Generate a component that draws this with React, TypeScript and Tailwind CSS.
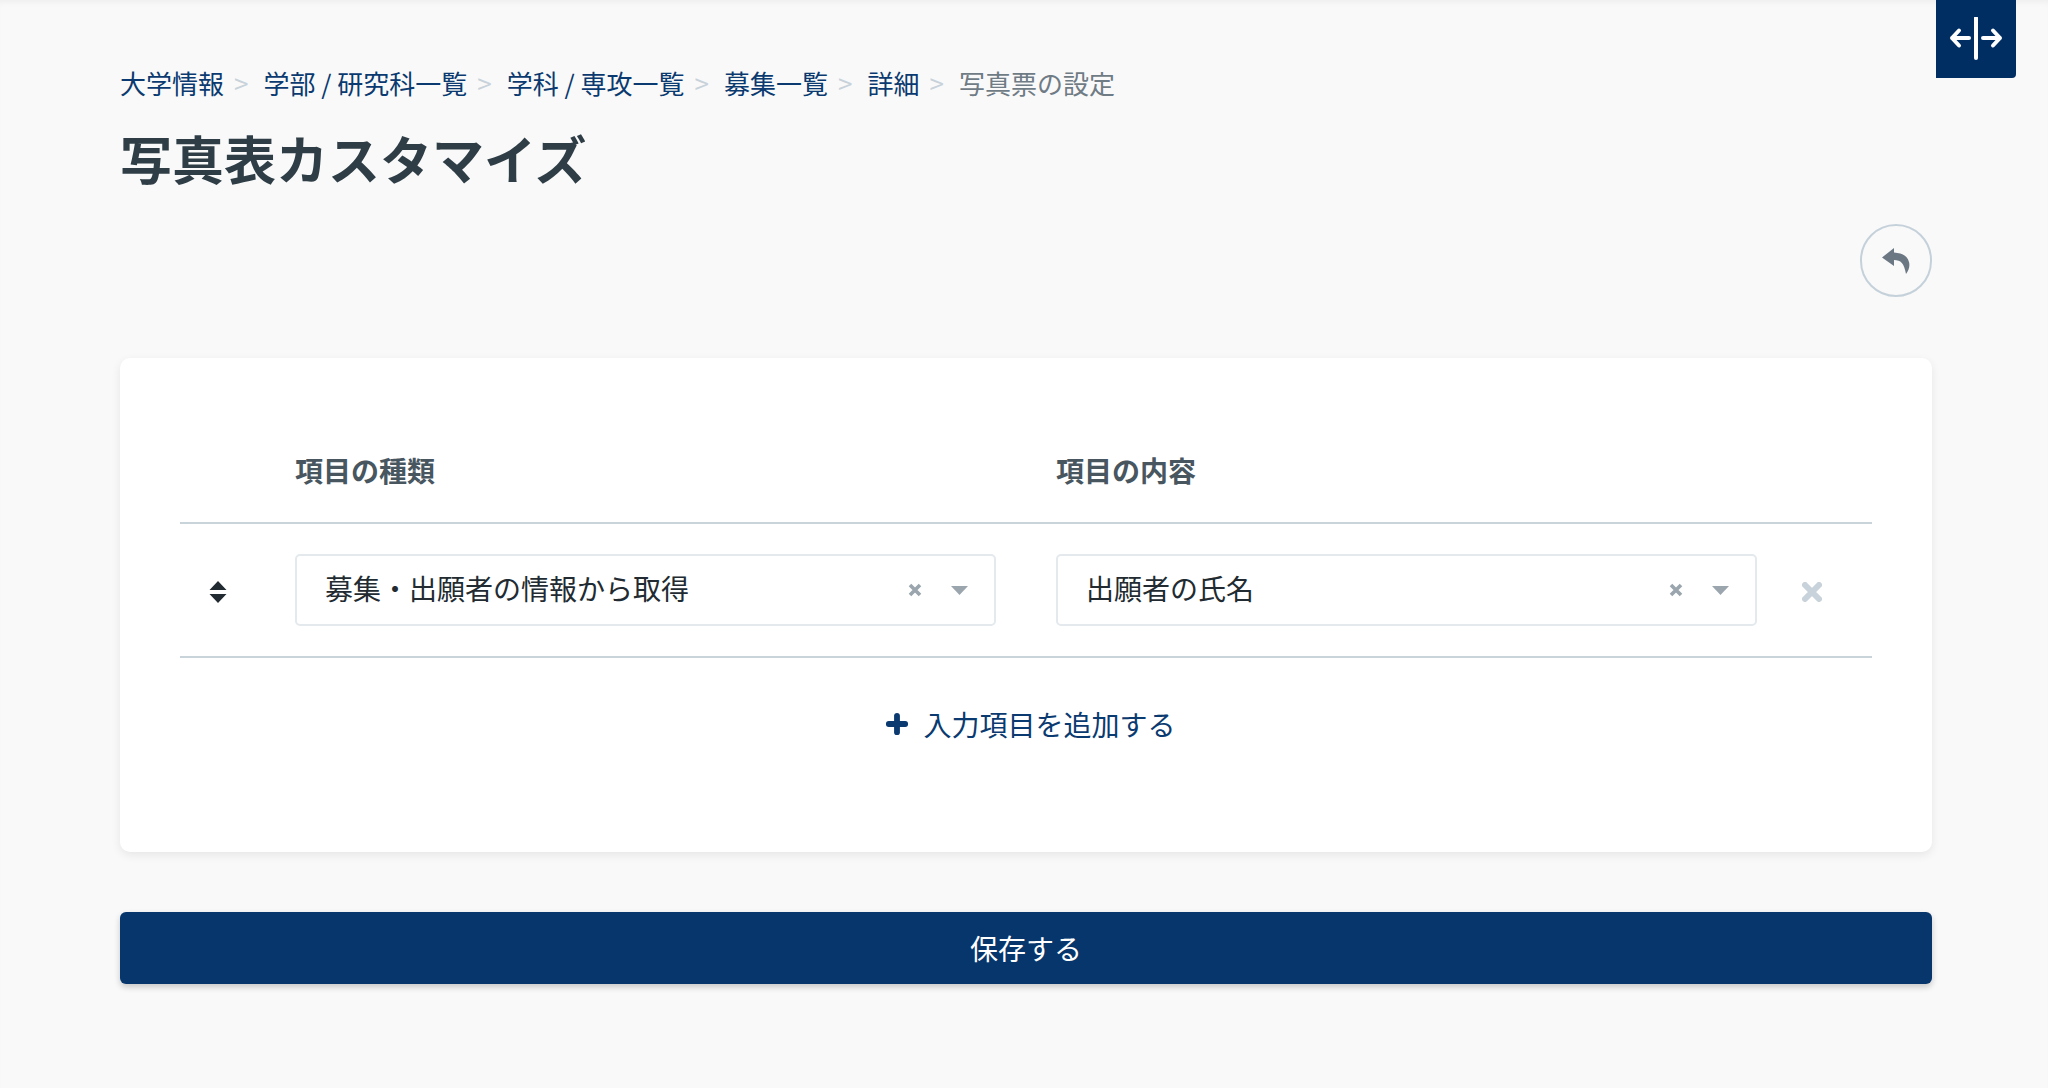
import { Plus } from "lucide-react";

const crumbs = ["大学情報", "学部 / 研究科一覧", "学科 / 専攻一覧", "募集一覧", "詳細"];

function SelectBox({ value }: { value: string }) {
    return (
        <div className="flex h-[72px] flex-1 items-center rounded-[5px] border-2 border-[#e4e9ed] bg-white pl-[28px] pr-[26px] text-[28px] text-[#212b31]">
            <span className="flex-1 pb-[4px] leading-none">{value}</span>
            <svg className="mr-[29px] h-[14px] w-[14px]" viewBox="0 0 14 14">
                <path d="M2 2l10 10M12 2L2 12" stroke="#9aa5ad" strokeWidth="3.6" />
            </svg>
            <svg className="h-[9px] w-[17px]" viewBox="0 0 17 9">
                <path d="M0 0h17L8.5 9z" fill="#9aa5ad" />
            </svg>
        </div>
    );
}

export default function App() {
    return (
        <div className="relative min-h-[1088px] bg-[#f9f9f9] pl-[120px] pr-[116px] pt-[61px] font-['Noto_Sans_CJK_JP','Noto_Sans',sans-serif] shadow-[inset_0_6px_6px_-4px_rgba(0,0,0,0.05)]">
            <button className="absolute right-[32px] top-0 flex h-[78px] w-[80px] items-center justify-center rounded-br-[4px] bg-[#002e63]">
                <svg className="h-[44px] w-[54px]" viewBox="0 0 54 44" fill="none" stroke="white" strokeWidth="4" strokeLinecap="round" strokeLinejoin="round">
                    <path d="M27 1v40" />
                    <path d="M20 21H3M10 13.5L3 21l7 7.5" />
                    <path d="M34 21h17M44 13.5L51 21l-7 7.5" />
                </svg>
            </button>

            <nav className="flex h-[44px] items-center text-[26px] leading-none">
                {crumbs.map((c) => (
                    <span key={c} className="flex items-center">
                        <span className="text-[#0a3a70]">{c}</span>
                        <span className="ml-[10px] mr-[15px] text-[#c8d2da]">&gt;</span>
                    </span>
                ))}
                <span className="text-[#6f7b85]">写真票の設定</span>
            </nav>

            <h1 className="mt-[16px] text-[52px] font-bold leading-[74px] text-[#2f3e46]">写真表カスタマイズ</h1>

            <div className="mt-[29px] flex justify-end">
                <button className="flex h-[73px] w-[72px] items-center justify-center rounded-full border-2 border-[#c5d1da]">
                    <svg className="h-[26px] w-[28px]" viewBox="0 0 28 26">
                        <path d="M12 0L0 9.5 12 18v-6c7 0 10 3 12 14 3-4 4-8 3-12-1.500-6-7-9-15-9.500z" fill="#6b7884" />
                    </svg>
                </button>
            </div>

            <section className="mt-[61px] rounded-[10px] bg-white px-[60px] pb-[114px] pt-[98px] shadow-[0_3px_10px_rgba(0,0,0,0.08)]">
                <div className="flex h-[68px] border-b-2 border-[#c9d3da] text-[28px] font-bold leading-none text-[#48565f]">
                    <span className="ml-[115px] w-[761px]">項目の種類</span>
                    <span>項目の内容</span>
                </div>

                <div className="flex h-[134px] items-center border-b-2 border-[#c9d3da]">
                    <div className="flex w-[115px] justify-center pr-[39px]">
                        <svg className="mt-[3px] h-[22px] w-[18px]" viewBox="0 0 18 22">
                            <path d="M9 0l8.500 9H.5zM.5 13h17L9 22z" fill="#212b31" />
                        </svg>
                    </div>
                    <div className="flex w-[1462px] gap-[60px]">
                        <SelectBox value="募集・出願者の情報から取得" />
                        <SelectBox value="出願者の氏名" />
                    </div>
                    <svg className="ml-[45px] mt-[3px] h-[20px] w-[20px]" viewBox="0 0 20 20">
                        <path d="M3 3l14 14M17 3L3 17" stroke="#c7d2da" strokeWidth="6" strokeLinecap="round" />
                    </svg>
                </div>

                <button className="mx-auto mt-[52px] flex items-center pl-[7px] text-[28px] leading-none text-[#0a3a70]">
                    <Plus className="mr-[12px] h-[28px] w-[28px]" strokeWidth={5} />
                    入力項目を追加する
                </button>
            </section>

            <button className="mt-[60px] flex h-[72px] w-full items-center justify-center rounded-[6px] bg-[#06366c] text-[28px] text-white shadow-[0_3px_6px_rgba(0,0,0,0.2)]">
                保存する
            </button>
        </div>
    );
}
